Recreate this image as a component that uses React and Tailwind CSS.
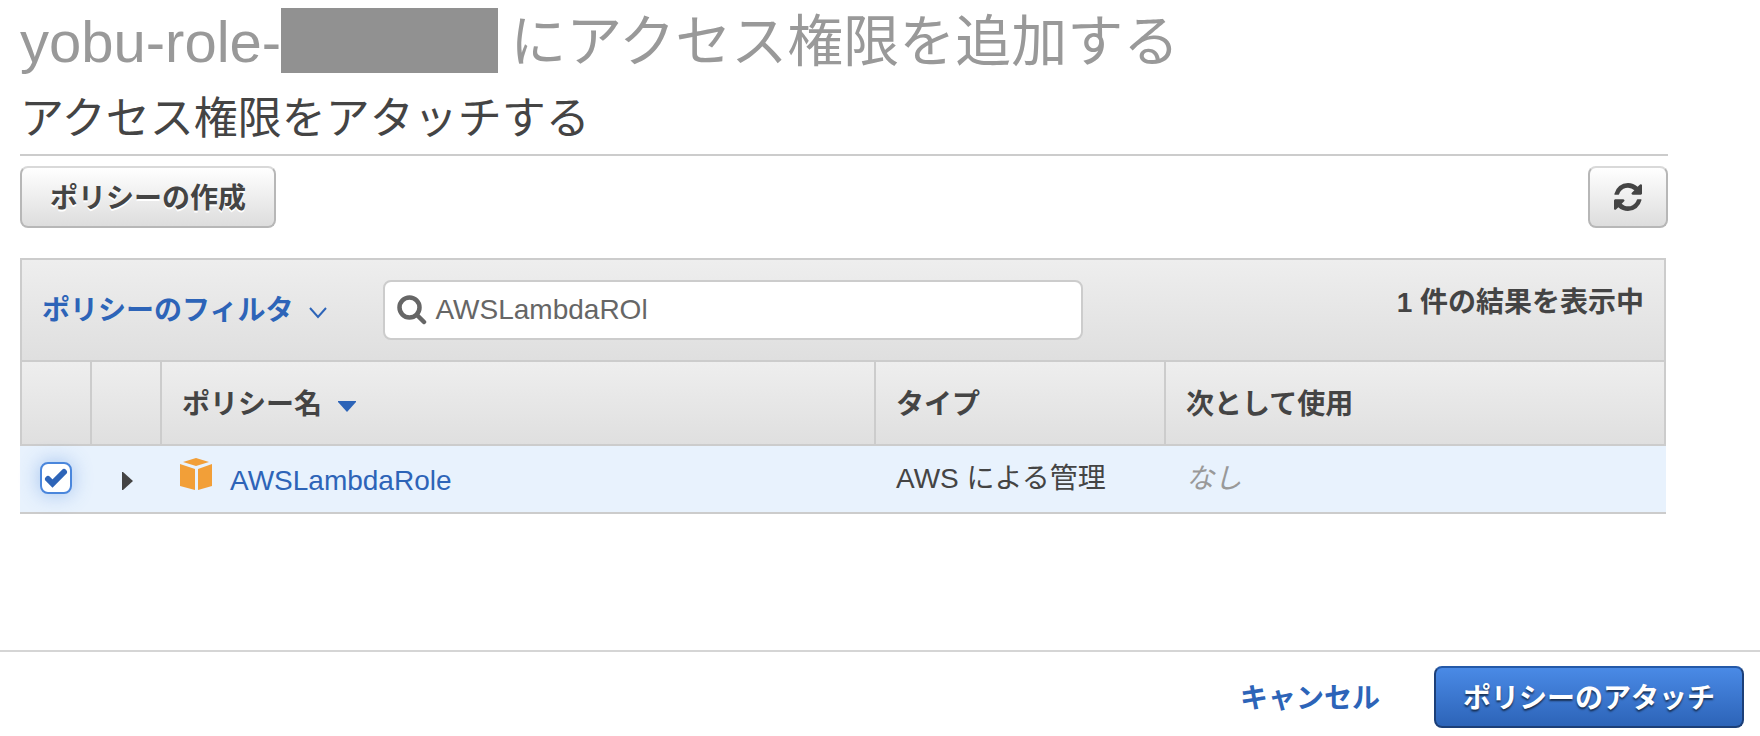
import { useState } from "react";

const policies = [
  {
    id: 1,
    name: "AWSLambdaRole",
    type: "AWS による管理",
    usedAs: "なし",
  },
];

function RefreshIcon() {
  return (
    <svg viewBox="0 0 1536 1536" className="h-7 w-7" fill="currentColor" aria-hidden="true">
      <path d="M1511 928q0 5-1 7-64 268-268 434.500t-478 166.500q-146 0-282.500-55t-243.500-157l-129 129q-19 19-45 19t-45-19-19-45v-448q0-26 19-45t45-19h448q26 0 45 19t19 45-19 45l-137 137q71 66 161 102t187 36q134 0 250-65t186-179q11-17 53-117 8-23 30-23h192q13 0 22.500 9.500t9.500 22.500zm25-800v448q0 26-19 45t-45 19h-448q-26 0-45-19t-19-45 19-45l138-138q-148-137-349-137-134 0-250 65t-186 179q-11 17-53 117-8 23-30 23h-199q-13 0-22.500-9.500t-9.500-22.500v-7q65-268 270-434.500t480-166.500q146 0 284 55.500t245 156.500l130-129q19-19 45-19t45 19 19 45z" />
    </svg>
  );
}

function SearchIcon() {
  return (
    <svg viewBox="0 0 30 30" className="h-[30px] w-[30px] shrink-0" fill="none" stroke="currentColor" aria-hidden="true">
      <circle cx="12.500" cy="12.500" r="10" strokeWidth="4.500" />
      <path d="M20 20l7 7" strokeWidth="4.500" strokeLinecap="round" />
    </svg>
  );
}

function CubeIcon() {
  return (
    <svg viewBox="0 0 32 32" className="h-8 w-8 shrink-0" fill="#f29f38" aria-hidden="true">
      <path d="M16 0l13 4-13 4L3 4z" />
      <path d="M0 6l15 5v21L0 28z" />
      <path d="M32 6l-14 5v21l14-4z" />
    </svg>
  );
}

function PolicyRow({ policy, checked, onToggle }) {
  return (
    <tr className="h-[68px] bg-[#e8f2fd]">
      <td className="border-b-2 border-[#ccc] pb-0.5 pl-5">
        <div className="relative h-8 w-8">
          <input
            type="checkbox"
            aria-label={policy.name}
            checked={checked}
            onChange={onToggle}
            className="block h-8 w-8 appearance-none rounded-lg border-2 border-[#4a86dc] bg-white shadow-[0_0_20px_rgba(74,134,220,0.45)]"
          />
          {checked && (
            <svg viewBox="0 0 32 32" className="pointer-events-none absolute inset-0 h-8 w-8" fill="none" stroke="#2d64b8" aria-hidden="true">
              <path d="M8 17l4.500 4.500L24 10" strokeWidth="6" strokeLinecap="round" />
            </svg>
          )}
        </div>
      </td>
      <td className="border-b-2 border-[#ccc] pt-1 pl-[30px]">
        <button type="button" aria-label="詳細を表示" className="block text-[#444]">
          <svg viewBox="0 0 11 18" className="h-[18px] w-[11px]" fill="currentColor" aria-hidden="true">
            <path d="M0 0h1l10 9-10 9H0z" />
          </svg>
        </button>
      </td>
      <td className="border-b-2 border-[#ccc] pl-[18px]">
        <div className="flex gap-[18px] pb-[3px]">
          <CubeIcon />
          <a href="#policy" className="mt-[7px] text-[#2d64b8]">
            {policy.name}
          </a>
        </div>
      </td>
      <td className="border-b-2 border-[#ccc] pl-5">{policy.type}</td>
      <td className="border-b-2 border-[#ccc] pl-5 text-[#999] italic">{policy.usedAs}</td>
    </tr>
  );
}

function App() {
  const [query, setQuery] = useState("AWSLambdaROl");
  const [selected, setSelected] = useState([1]);

  const toggle = (id) => {
    setSelected(selected.includes(id) ? selected.filter((s) => s !== id) : [...selected, id]);
  };

  return (
    <div className="flex min-h-screen flex-col bg-white font-['Liberation_Sans','Noto_Sans_CJK_JP',sans-serif] text-[28px] leading-8 text-[#444]">
      <main className="flex-1 pr-[92px] pl-5">
        <h1 className="flex h-20 items-center text-[56px] leading-[72px] text-[#999]">
          <span className="pt-1 text-[58px]">yobu-role-</span>
          <span className="mr-3 h-[65px] w-[217px] bg-[#919191]" />
          <span className="pt-1">にアクセス権限を追加する</span>
        </h1>
        <h2 className="border-b-2 border-[#ccc] pt-[14px] pb-[10px] text-[44px] leading-[50px]">
          アクセス権限をアタッチする
        </h2>

        <div className="mt-[10px] flex justify-between">
          <button
            type="button"
            className="h-[62px] rounded-lg border-2 border-[#b7b7b7] border-t-[#d9d9d9] bg-linear-to-b from-white to-[#dddddd] px-7 pt-1 font-bold text-shadow-[0_2px_0_#fff]"
          >
            ポリシーの作成
          </button>
          <button
            type="button"
            aria-label="更新"
            className="flex h-[62px] w-20 items-center justify-center rounded-lg border-2 border-[#b7b7b7] border-t-[#d9d9d9] bg-linear-to-b from-white to-[#dddddd]"
          >
            <RefreshIcon />
          </button>
        </div>

        <div className="mt-[30px] mr-0.5">
          <div className="flex h-[104px] items-center border-2 border-[#ccc] bg-linear-to-b from-[#eeeeee] to-[#dfdfdf] px-5">
            <button type="button" className="flex items-center gap-4 pt-0.5 font-bold text-[#2d64b8]">
              ポリシーのフィルタ
              <svg viewBox="0 0 18 12" className="mt-1 h-3 w-[18px]" fill="none" stroke="currentColor" strokeWidth="2" aria-hidden="true">
                <path d="M1 1l8 9 8-9" />
              </svg>
            </button>
            <label className="ml-14 flex h-[60px] w-[700px] items-center gap-2 rounded-lg border-2 border-[#ccc] bg-white px-3 text-[#666]">
              <SearchIcon />
              <input
                type="text"
                aria-label="検索"
                value={query}
                onChange={(e) => setQuery(e.target.value)}
                className="min-w-0 flex-1 outline-none"
              />
            </label>
            <p className="mb-[14px] ml-auto font-bold">1 件の結果を表示中</p>
          </div>

          <table className="w-full table-fixed border-separate border-spacing-0 text-left">
            <colgroup>
              <col className="w-[72px]" />
              <col className="w-[70px]" />
              <col className="w-[714px]" />
              <col className="w-[290px]" />
              <col />
            </colgroup>
            <thead>
              <tr className="h-[84px] bg-linear-to-b from-[#eeeeee] to-[#dfdfdf]">
                <th className="border-x-2 border-b-2 border-[#ccc]" />
                <th className="border-r-2 border-b-2 border-[#ccc]" />
                <th className="border-r-2 border-b-2 border-[#ccc] pt-1 pl-5">
                  <div className="flex items-center gap-4">
                    ポリシー名
                    <svg viewBox="0 0 18 11" className="mt-0.5 h-[11px] w-[18px]" fill="#2d64b8" aria-hidden="true">
                      <path d="M0 0h18v1l-9 10L0 1z" />
                    </svg>
                  </div>
                </th>
                <th className="border-r-2 border-b-2 border-[#ccc] pt-1 pl-5">タイプ</th>
                <th className="border-r-2 border-b-2 border-[#ccc] pt-1 pl-5">次として使用</th>
              </tr>
            </thead>
            <tbody>
              {policies.map((policy) => (
                <PolicyRow
                  key={policy.id}
                  policy={policy}
                  checked={selected.includes(policy.id)}
                  onToggle={() => toggle(policy.id)}
                />
              ))}
            </tbody>
          </table>
        </div>
      </main>

      <footer className="flex items-center justify-end gap-[54px] border-t-2 border-[#d5d5d5] px-4 pt-[14px] pb-2 font-bold">
        <a href="#cancel" className="pt-1 text-[#2d64b8]">
          キャンセル
        </a>
        <button
          type="button"
          className="h-[62px] rounded-lg border-2 border-[#1c3f78] border-t-[#2459a8] bg-linear-to-b from-[#4a8ae6] to-[#2d64b8] px-[27px] pt-1 text-white text-shadow-[0_2px_2px_rgba(0,0,0,0.6)]"
        >
          ポリシーのアタッチ
        </button>
      </footer>
    </div>
  );
}

export default App;
